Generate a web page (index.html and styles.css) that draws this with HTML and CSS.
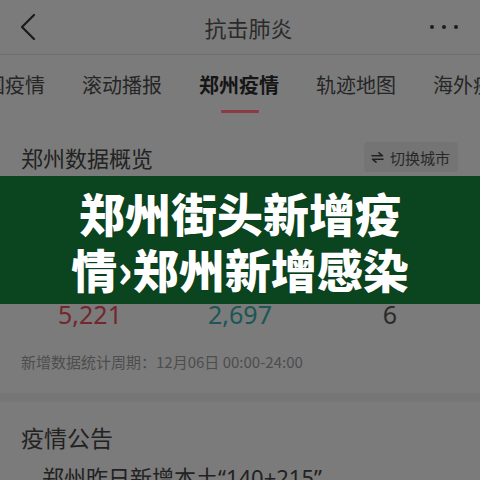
FILE: index.html
```html
<!DOCTYPE html>
<html lang="zh-CN">
<head>
<meta charset="utf-8">
<title>抗击肺炎</title>
<link rel="stylesheet" href="styles.css">
</head>
<body>
<div class="page">
  <header class="topbar">
    <svg class="back" width="20" height="28" viewBox="0 0 20 28"><polyline points="15,2 3,14 15,26" fill="none" stroke="#1a1a1a" stroke-width="2.2" stroke-linecap="round" stroke-linejoin="round"/></svg>
    <div class="title">抗击肺炎</div>
    <div class="dots"><span></span><span></span><span></span></div>
  </header>
  <nav class="tabs">
    <span class="tab">全国疫情</span>
    <span class="tab">滚动播报</span>
    <span class="tab active">郑州疫情</span>
    <span class="tab">轨迹地图</span>
    <span class="tab">海外疫情</span>
  </nav>
  <div class="underline-row"><div class="underline"></div></div>
  <section class="overview">
    <div class="ov-head">
      <h2 class="ov-title">郑州数据概览</h2>
      <div class="switch"><svg class="swap" width="13" height="11" viewBox="0 0 13 11"><path d="M1 3.8 H11.5 L8 0.8 M12 7.2 H1.5 L5 10.2" fill="none" stroke="#222" stroke-width="1.6" stroke-linecap="round" stroke-linejoin="round"/></svg>切换城市</div>
    </div>
  </section>
  <div class="banner">
    <p>郑州街头新增疫</p>
    <p>情›郑州新增感染</p>
  </div>
  <div class="stats">
    <div class="stat red">5,221</div>
    <div class="stat teal">2,697</div>
    <div class="stat dark">6</div>
  </div>
  <div class="period">新增数据统计周期：12月06日 00:00-24:00</div>
  <div class="band"></div>
  <h2 class="notice-title">疫情公告</h2>
  <div class="notice-item">郑州昨日新增本土“140+215”</div>
</div>
</body>
</html>
```
FILE: styles.css
```css
html, body {
  margin: 0;
  padding: 0;
}
body {
  background: #7b7b7b;
  font-family: "Noto Sans CJK SC", "Noto Sans", sans-serif;
  color: #222;
  width: 480px;
  height: 480px;
  overflow: hidden;
}
.page {
  width: 480px;
}
.topbar {
  height: 54px;
  border-bottom: 1px solid #6e6e6e;
  display: flex;
  align-items: center;
  justify-content: space-between;
  padding: 0 22px 0 19px;
}
.back {
  display: block;
}
.title {
  font-size: 22px;
  color: #2b2b2b;
  margin-left: 28px;
}
.dots {
  display: flex;
  gap: 8px;
}
.dots span {
  width: 4px;
  height: 4px;
  border-radius: 50%;
  background: #1c1c1c;
}
.tabs {
  display: flex;
  gap: 37px;
  margin-left: -35px;
  padding-top: 16px;
  white-space: nowrap;
  font-size: 20px;
  line-height: 28px;
  color: #262626;
}
.tab.active {
  font-weight: 700;
  color: #151515;
}
.underline-row {
  display: flex;
  justify-content: center;
  padding-top: 11px;
}
.underline {
  width: 38px;
  height: 3px;
  background: #8b3a44;
  border-radius: 1px;
}
.overview {
  padding: 29px 22px 0 21px;
}
.ov-head {
  display: flex;
  align-items: center;
  justify-content: space-between;
  height: 30px;
}
.ov-title {
  margin: 0;
  font-size: 22px;
  font-weight: 400;
  color: #222;
}
.switch {
  background: #747474;
  border-radius: 4px;
  height: 30px;
  padding: 0 8px 0 7px;
  display: flex;
  align-items: center;
  font-size: 15px;
  color: #282828;
}
.swap {
  display: block;
  margin-right: 6px;
}
.banner {
  margin-top: 4px;
  height: 128px;
  background: #0a451f;
  display: flex;
  flex-direction: column;
  justify-content: center;
  align-items: center;
}
.banner p {
  margin: 0;
  color: #ffffff;
  font-size: 46px;
  font-weight: 900;
  line-height: 56px;
  text-shadow: 0 0 1px #0a2a12;
}
.stats {
  display: grid;
  grid-template-columns: repeat(3, 1fr);
  padding: 0 15px;
  font-family: "Noto Sans", sans-serif;
  font-size: 25px;
  line-height: 20px;
  text-align: center;
}
.stat.red { color: #74262d; }
.stat.teal { color: #1c5656; }
.stat.dark { color: #2a2a2a; }
.period {
  margin-top: 28px;
  padding-left: 21px;
  font-size: 15px;
  line-height: 20px;
  color: #4d4d4d;
}
.band {
  margin-top: 21px;
  height: 9px;
  background: #767676;
}
.notice-title {
  margin: 20px 0 0;
  padding-left: 21px;
  font-size: 23px;
  font-weight: 400;
  line-height: 30px;
  color: #222;
}
.notice-item {
  margin-top: 10px;
  padding-left: 42px;
  font-family: "Noto Sans", "Noto Sans CJK SC", sans-serif;
  font-size: 22px;
  line-height: 30px;
  color: #222;
}
```
